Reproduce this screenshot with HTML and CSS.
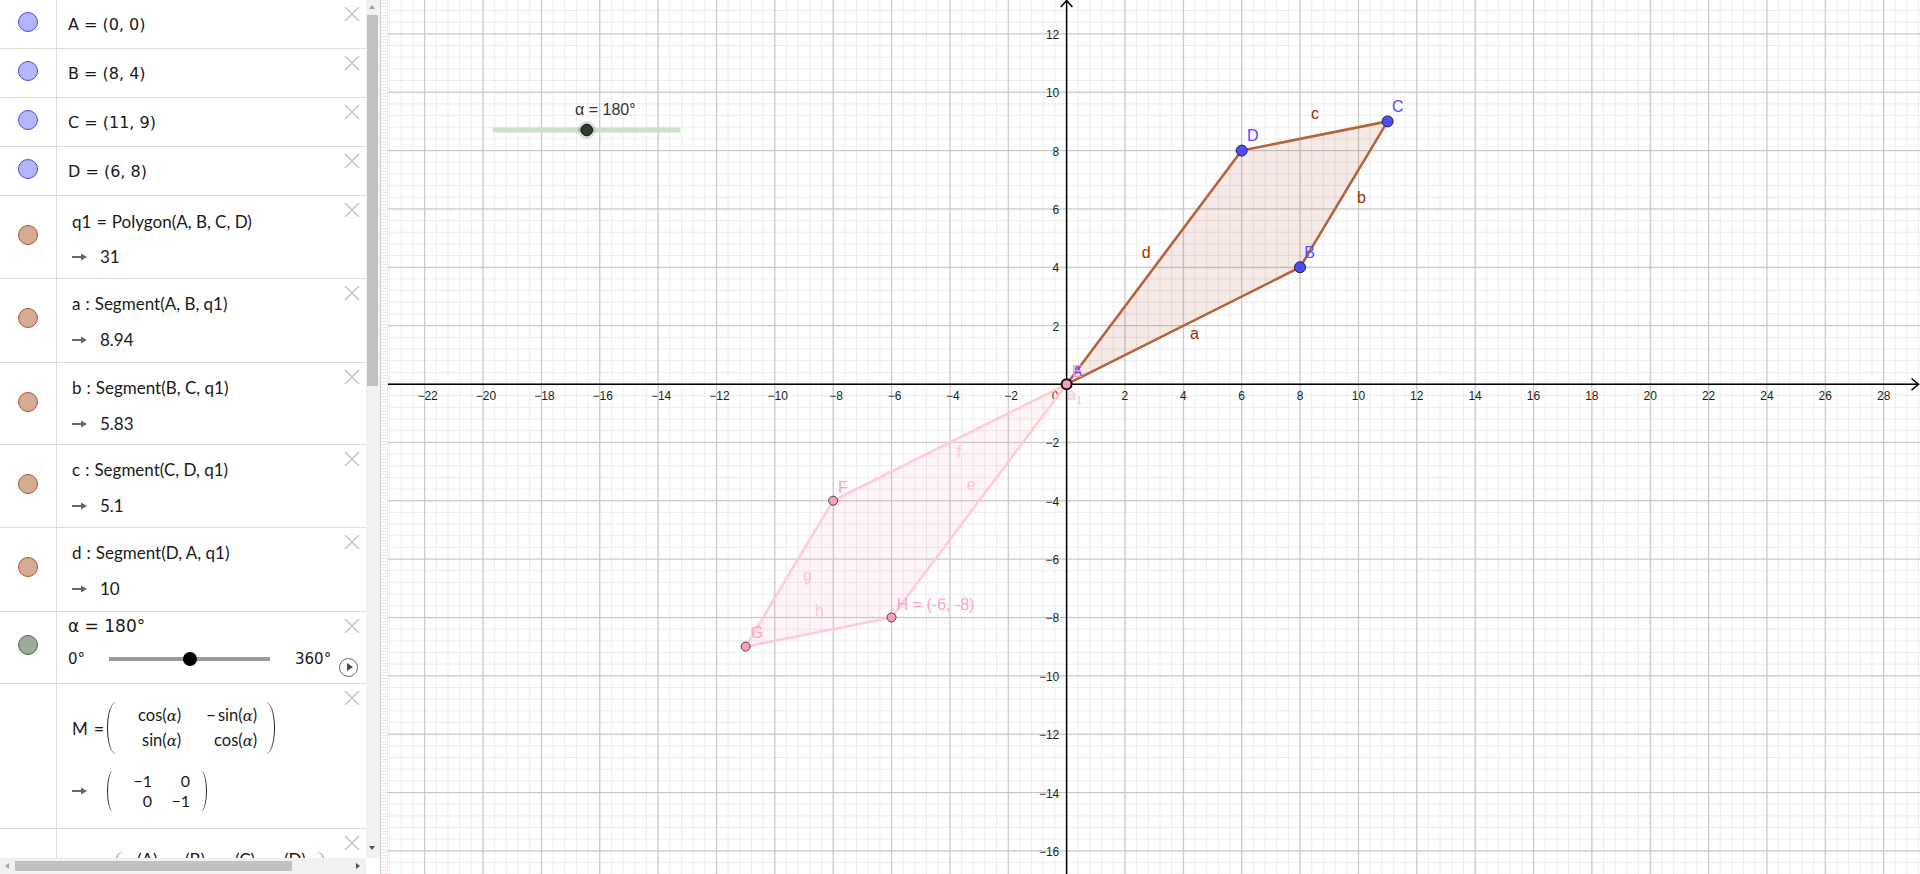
FILE: index.html
```html
<!DOCTYPE html>
<html lang="en">
<head>
<meta charset="utf-8">
<title>GeoGebra – Rotation</title>
<link rel="stylesheet" href="styles.css">
</head>
<body>
<div class="app">
  <aside class="algebra">
    <div class="av-list">
      <div class="row pt">
        <div class="icon"><span class="dot blue"></span></div>
        <div class="txt plain">A = (0, 0)</div>
        <span class="close"><svg viewBox="0 0 16 16"><path d="M1 1L15 15M15 1L1 15"/></svg></span>
      </div>
      <div class="row pt">
        <div class="icon"><span class="dot blue"></span></div>
        <div class="txt plain">B = (8, 4)</div>
        <span class="close"><svg viewBox="0 0 16 16"><path d="M1 1L15 15M15 1L1 15"/></svg></span>
      </div>
      <div class="row pt">
        <div class="icon"><span class="dot blue"></span></div>
        <div class="txt plain">C = (11, 9)</div>
        <span class="close"><svg viewBox="0 0 16 16"><path d="M1 1L15 15M15 1L1 15"/></svg></span>
      </div>
      <div class="row pt">
        <div class="icon"><span class="dot blue"></span></div>
        <div class="txt plain">D = (6, 8)</div>
        <span class="close"><svg viewBox="0 0 16 16"><path d="M1 1L15 15M15 1L1 15"/></svg></span>
      </div>
      <div class="row tex r82">
        <div class="icon"><span class="dot brown"></span></div>
        <div class="txt latex">
          <div class="l1">q1<span class="rel">=</span>Polygon(A, B, C, D)</div>
          <div class="l2"><svg class="arrow" viewBox="0 0 15 8"><path d="M0 4H11"/><polygon points="9,0.5 15,4 9,7.5"/></svg><span>31</span></div>
        </div>
        <span class="close"><svg viewBox="0 0 16 16"><path d="M1 1L15 15M15 1L1 15"/></svg></span>
      </div>
      <div class="row tex r83">
        <div class="icon"><span class="dot brown"></span></div>
        <div class="txt latex">
          <div class="l1">a<span class="col">:</span>Segment(A, B, q1)</div>
          <div class="l2"><svg class="arrow" viewBox="0 0 15 8"><path d="M0 4H11"/><polygon points="9,0.5 15,4 9,7.5"/></svg><span>8.94</span></div>
        </div>
        <span class="close"><svg viewBox="0 0 16 16"><path d="M1 1L15 15M15 1L1 15"/></svg></span>
      </div>
      <div class="row tex r81">
        <div class="icon"><span class="dot brown"></span></div>
        <div class="txt latex">
          <div class="l1">b<span class="col">:</span>Segment(B, C, q1)</div>
          <div class="l2"><svg class="arrow" viewBox="0 0 15 8"><path d="M0 4H11"/><polygon points="9,0.5 15,4 9,7.5"/></svg><span>5.83</span></div>
        </div>
        <span class="close"><svg viewBox="0 0 16 16"><path d="M1 1L15 15M15 1L1 15"/></svg></span>
      </div>
      <div class="row tex r82">
        <div class="icon"><span class="dot brown"></span></div>
        <div class="txt latex">
          <div class="l1">c<span class="col">:</span>Segment(C, D, q1)</div>
          <div class="l2"><svg class="arrow" viewBox="0 0 15 8"><path d="M0 4H11"/><polygon points="9,0.5 15,4 9,7.5"/></svg><span>5.1</span></div>
        </div>
        <span class="close"><svg viewBox="0 0 16 16"><path d="M1 1L15 15M15 1L1 15"/></svg></span>
      </div>
      <div class="row tex r83">
        <div class="icon"><span class="dot brown"></span></div>
        <div class="txt latex">
          <div class="l1">d<span class="col">:</span>Segment(D, A, q1)</div>
          <div class="l2"><svg class="arrow" viewBox="0 0 15 8"><path d="M0 4H11"/><polygon points="9,0.5 15,4 9,7.5"/></svg><span>10</span></div>
        </div>
        <span class="close"><svg viewBox="0 0 16 16"><path d="M1 1L15 15M15 1L1 15"/></svg></span>
      </div>
      <div class="row sl">
        <div class="icon"><span class="dot green"></span></div>
        <div class="txt slc">
          <div class="sl1">α = 180°</div>
          <div class="sl2">
            <span class="min">0°</span>
            <span class="track"><span class="knob"></span></span>
            <span class="max">360°</span>
            <span class="play"></span>
          </div>
        </div>
        <span class="close"><svg viewBox="0 0 16 16"><path d="M1 1L15 15M15 1L1 15"/></svg></span>
      </div>
      <div class="row mat">
        <div class="icon"></div>
        <div class="txt latex matc">
          <div class="mline1">
            <span>M</span><span class="eq">=</span>
            <span class="paren pl big"></span>
            <div class="mgrid g1">
              <span>cos(<i class="mi">α</i>)</span>
              <span>−&#8201;sin(<i class="mi">α</i>)</span>
              <span>sin(<i class="mi">α</i>)</span>
              <span>cos(<i class="mi">α</i>)</span>
            </div>
            <span class="paren pr big"></span>
          </div>
          <div class="mline2">
            <svg class="arrow am" viewBox="0 0 15 8"><path d="M0 4H11"/><polygon points="9,0.5 15,4 9,7.5"/></svg>
            <span class="paren pl small"></span>
            <div class="mgrid g2">
              <span>−1</span><span>0</span>
              <span>0</span><span>−1</span>
            </div>
            <span class="paren pr small"></span>
          </div>
        </div>
        <span class="close"><svg viewBox="0 0 16 16"><path d="M1 1L15 15M15 1L1 15"/></svg></span>
      </div>
      <div class="row last">
        <div class="icon"></div>
        <div class="txt latex lastc">
          <span class="paren pl big lp"></span>
          <span class="li w48">(A)</span>
          <span class="li w50">(B)</span>
          <span class="li w49">(C)</span>
          <span class="li w34">(D)</span>
          <span class="paren pr big lp"></span>
        </div>
        <span class="close"><svg viewBox="0 0 16 16"><path d="M1 1L15 15M15 1L1 15"/></svg></span>
      </div>
    </div>
    <div class="vscroll"><span class="arr up"></span><span class="vthumb"></span><span class="arr down"></span></div>
    <div class="hscroll"><span class="arr left"></span><span class="hthumb"></span><span class="arr right"></span></div>
    <div class="corner"></div>
  </aside>
  <div class="splitter"></div>
  <main class="graphics">
    <svg class="board" width="1532" height="874" viewBox="0 0 1532 874">
      <defs>
        <pattern id="minor" patternUnits="userSpaceOnUse" x="678.1" y="383.5" width="11.672" height="11.672">
          <rect x="0" y="0" width="11.672" height="1" fill="#ebebeb"/>
          <rect x="0" y="0" width="1" height="11.672" fill="#ebebeb"/>
        </pattern>
        <pattern id="major" patternUnits="userSpaceOnUse" x="678.1" y="383.5" width="58.36" height="58.36">
          <rect x="0" y="0" width="58.36" height="1.1" fill="#c4c4c4"/>
          <rect x="0" y="0" width="1.1" height="58.36" fill="#c4c4c4"/>
        </pattern>
      </defs>
      <rect width="1532" height="874" fill="#ffffff"/>
      <rect width="1532" height="874" fill="url(#minor)"/>
      <rect width="1532" height="874" fill="url(#major)"/>

      <g class="axis">
        <path d="M0 384.3H1530"/>
        <path d="M1523.5 378.5L1530.5 384.3L1523.5 390.1"/>
        <path d="M678.6 0V874"/>
        <path d="M672.8 7L678.6 0.5L684.4 7"/>
      </g>

      <g class="tk xt">
        <text x="39.6" y="400">−22</text>
        <text x="98" y="400">−20</text>
        <text x="156.4" y="400">−18</text>
        <text x="214.7" y="400">−16</text>
        <text x="273.1" y="400">−14</text>
        <text x="331.4" y="400">−12</text>
        <text x="389.8" y="400">−10</text>
        <text x="448.2" y="400">−8</text>
        <text x="506.5" y="400">−6</text>
        <text x="564.9" y="400">−4</text>
        <text x="623.2" y="400">−2</text>
        <text x="667" y="400">0</text>
        <text x="736.96" y="400">2</text>
        <text x="795.32" y="400">4</text>
        <text x="853.68" y="400">6</text>
        <text x="912.04" y="400">8</text>
        <text x="970.4" y="400">10</text>
        <text x="1028.76" y="400">12</text>
        <text x="1087.12" y="400">14</text>
        <text x="1145.48" y="400">16</text>
        <text x="1203.84" y="400">18</text>
        <text x="1262.2" y="400">20</text>
        <text x="1320.56" y="400">22</text>
        <text x="1378.92" y="400">24</text>
        <text x="1437.28" y="400">26</text>
        <text x="1495.64" y="400">28</text>
      </g>
      <g class="tk yt">
        <text x="671.3" y="38.8">12</text>
        <text x="671.3" y="97.2">10</text>
        <text x="671.3" y="155.6">8</text>
        <text x="671.3" y="213.9">6</text>
        <text x="671.3" y="272.3">4</text>
        <text x="671.3" y="330.6">2</text>
        <text x="671.3" y="447.4">−2</text>
        <text x="671.3" y="505.7">−4</text>
        <text x="671.3" y="564.1">−6</text>
        <text x="671.3" y="622.4">−8</text>
        <text x="671.3" y="680.8">−10</text>
        <text x="671.3" y="739.2">−12</text>
        <text x="671.3" y="797.5">−14</text>
        <text x="671.3" y="855.9">−16</text>
      </g>

      <polygon class="q1" points="678.6,384.3 912.04,267.28 999.58,121.38 853.68,150.56"/>
      <polygon class="q1r" points="678.6,384.3 445.16,500.72 357.62,646.62 503.52,617.44"/>

      <g class="lb seg">
        <text x="802" y="339">a</text>
        <text x="969" y="203">b</text>
        <text x="923" y="119">c</text>
        <text x="753.7" y="258">d</text>
      </g>
      <g class="lb segp">
        <text x="578.7" y="490">e</text>
        <text x="568.7" y="457">f</text>
        <text x="415" y="581">g</text>
        <text x="427" y="616">h</text>
        <text x="679" y="400">a<tspan class="sub" dy="4">1</tspan></text>
      </g>

      <circle class="pb" cx="912.04" cy="267.28" r="5.5"/>
      <circle class="pb" cx="999.58" cy="121.38" r="5.5"/>
      <circle class="pb" cx="853.68" cy="150.56" r="5.5"/>
      <circle class="pp" cx="445.16" cy="500.72" r="4.5"/>
      <circle class="pp" cx="357.62" cy="646.62" r="4.5"/>
      <circle class="pp" cx="503.52" cy="617.44" r="4.5"/>
      <circle class="po" cx="678.6" cy="384.3" r="5"/>

      <g class="lb ptb">
        <text x="916.3" y="258">B</text>
        <text x="1004" y="112">C</text>
        <text x="859" y="141">D</text>
        <text x="683.7" y="377">A</text>
      </g>
      <g class="lb ptp">
        <text x="683.7" y="377">E</text>
        <text x="450" y="493">F</text>
        <text x="362.7" y="638">G</text>
        <text x="508.7" y="610">H = (-6, -8)</text>
      </g>

      <text class="sltext" x="187" y="115">α = 180°</text>
      <line class="sline" x1="107" y1="130" x2="290" y2="130"/>
      <circle cx="198.7" cy="130" r="9" fill="rgba(60,90,60,0.18)"/>
      <circle class="sknob" cx="198.7" cy="130" r="5.8"/>
    </svg>
  </main>
</div>
</body>
</html>
```

FILE: styles.css
```css
html, body {
  margin: 0;
  padding: 0;
  background: #ffffff;
  overflow: hidden;
}

.app {
  display: flex;
  width: 1920px;
  height: 874px;
}

/* ---------- Algebra view ---------- */
.algebra {
  flex: none;
  width: 380px;
  display: grid;
  grid-template-columns: 366px 14px;
  grid-template-rows: 858px 16px;
  border-right: 1px solid #cfcfcf;
  background: #ffffff;
}

.av-list {
  overflow: hidden;
  color: #1a1a1a;
}

.row {
  display: flex;
  border-bottom: 1px solid #dcdcdc;
  box-sizing: content-box;
}
.row.pt { height: 48px; }
.row.r81 { height: 81px; }
.row.r82 { height: 82px; }
.row.r83 { height: 83px; }
.row.sl { height: 71px; }
.row.mat { height: 144px; }
.row.last { height: 80px; }

.icon {
  flex: none;
  width: 56px;
  border-right: 1px solid #dcdcdc;
  display: flex;
  justify-content: center;
  align-items: flex-start;
}

.dot {
  display: block;
  width: 18px;
  height: 18px;
  border-radius: 50%;
  border: 1px solid;
}
.pt .dot { margin-top: 12px; }
.tex .dot { margin-top: 29px; }
.sl .dot { margin-top: 23px; }

.dot.blue { background: #b5b5fb; border-color: #4a4ae6; }
.dot.brown { background: #d5ab96; border-color: #a9562e; }
.dot.green { background: #9eab9c; border-color: #566154; }

.txt {
  flex: 1;
  min-width: 0;
  white-space: nowrap;
}

.close {
  flex: none;
  width: 16px;
  height: 16px;
  margin: 6px 6px 0 0;
}
.close svg {
  display: block;
  width: 16px;
  height: 16px;
  fill: none;
  stroke: #cdc8c8;
  stroke-width: 1.7;
}

.plain {
  font-family: "DejaVu Sans", sans-serif;
  font-size: 16px;
  line-height: 24px;
  padding: 13px 0 0 11px;
}

.latex {
  font-family: Lato, "DejaVu Sans", sans-serif;
  font-size: 17px;
  padding: 13px 0 0 15px;
}
.l1 { line-height: 24px; height: 24px; }
.rel { margin: 0 5px; font-size: 18px; }
.col { margin: 0 5px; }
.l2 {
  display: flex;
  align-items: center;
  gap: 13px;
  height: 24px;
  line-height: 24px;
  margin-top: 12px;
}

.arrow {
  flex: none;
  width: 15px;
  height: 8px;
  display: block;
}
.arrow path { stroke: #666; stroke-width: 2; fill: none; }
.arrow polygon { fill: #666; }

/* slider row */
.slc {
  font-family: "DejaVu Sans", sans-serif;
  padding: 3px 0 0 11px;
}
.sl1 { font-size: 17px; line-height: 22px; }
.sl2 {
  display: flex;
  align-items: center;
  height: 22px;
  margin-top: 11px;
  font-size: 15px;
  line-height: 22px;
}
.sl2 > span { flex: none; }
.min { width: 41px; }
.track {
  width: 161px;
  height: 4px;
  background: #9a9a9a;
  position: relative;
}
.knob {
  position: absolute;
  left: 50%;
  top: 50%;
  width: 14px;
  height: 14px;
  margin: -7px 0 0 -7px;
  border-radius: 50%;
  background: #000;
}
.max { margin-left: 25px; }
.play {
  box-sizing: border-box;
  width: 19px;
  height: 19px;
  border: 1.5px solid #6a6a6a;
  border-radius: 50%;
  margin: 16px 0 0 8px;
  display: flex;
  align-items: center;
  justify-content: center;
}
.play::after {
  content: "";
  width: 0;
  height: 0;
  margin-left: 2px;
  border-top: 4px solid transparent;
  border-bottom: 4px solid transparent;
  border-left: 6px solid #4a4a4a;
}

/* matrix row */
.matc { padding: 18px 0 0 15px; }
.mline1 {
  display: flex;
  align-items: center;
  height: 52px;
}
.eq { margin: 0 3px 0 6px; font-size: 18px; }
.paren {
  display: block;
  flex: none;
  box-sizing: border-box;
}
.pl { border-left: 1.5px solid #222; }
.pr { border-right: 1.5px solid #222; }
.big { width: 9px; height: 52px; }
.big.pl { border-radius: 9px 0 0 9px / 26px 0 0 26px; }
.big.pr { border-radius: 0 9px 9px 0 / 0 26px 26px 0; }
.small { width: 6px; height: 40px; }
.small.pl { border-radius: 6px 0 0 6px / 20px 0 0 20px; }
.small.pr { border-radius: 0 6px 6px 0 / 0 20px 20px 0; }

.mgrid {
  display: grid;
  justify-items: end;
  flex: none;
}
.g1 {
  grid-template-columns: 62px 76px;
  line-height: 24px;
  margin: 0 9px 0 3px;
  font-size: 16.5px;
}
.g2 {
  grid-template-columns: 35px 38px;
  line-height: 20px;
  margin: 0 11px 0 4px;
  font-size: 16px;
}
.mi {
  font-family: "DejaVu Serif", serif;
  font-style: italic;
  font-size: 15px;
}
.mline2 {
  display: flex;
  align-items: center;
  height: 40px;
  margin-top: 17px;
}
.am { margin-right: 20px; }

/* last (cut) row */
.lastc {
  display: flex;
  align-items: flex-start;
  padding: 19px 0 0 56px;
  line-height: 24px;
}
.lp { margin-top: 4px; }
.lp.pl { margin-right: 15px; }
.li { display: block; flex: none; }
.w48 { width: 48px; }
.w50 { width: 50px; }
.w49 { width: 49px; }
.w34 { width: 34px; }

/* scrollbars */
.vscroll {
  background: #f1f1f1;
  display: flex;
  flex-direction: column;
  align-items: flex-start;
}
.arr {
  display: block;
  width: 0;
  height: 0;
  flex: none;
}
.arr.up {
  margin: 5px 0 0 3px;
  border-left: 3.5px solid transparent;
  border-right: 3.5px solid transparent;
  border-bottom: 4px solid #a3a3a3;
}
.vthumb {
  display: block;
  width: 11px;
  height: 371px;
  margin: 6px 0 0 1px;
  background: #c1c1c1;
}
.arr.down {
  margin: auto 0 8px 3px;
  border-left: 3.5px solid transparent;
  border-right: 3.5px solid transparent;
  border-top: 4px solid #505050;
}
.hscroll {
  background: #f1f1f1;
  display: flex;
  align-items: center;
}
.arr.left {
  margin-left: 5px;
  border-top: 3.5px solid transparent;
  border-bottom: 3.5px solid transparent;
  border-right: 4px solid #a3a3a3;
}
.hthumb {
  display: block;
  width: 277px;
  height: 10px;
  margin-left: 6px;
  background: #c1c1c1;
}
.arr.right {
  margin: 0 6px 0 auto;
  border-top: 3.5px solid transparent;
  border-bottom: 3.5px solid transparent;
  border-left: 4px solid #505050;
}
.corner { background: #ffffff; }

/* splitter */
.splitter {
  flex: none;
  width: 6px;
  border-right: 1px solid #ececec;
  background: repeating-linear-gradient(to bottom, #f4e6e6 0 1px, #ffffff 1px 3px);
}

/* ---------- Graphics view ---------- */
.graphics {
  flex: 1;
  overflow: hidden;
  background: #ffffff;
}
.board { display: block; }

.axis path {
  fill: none;
  stroke: #000;
  stroke-width: 1.5;
}

.tk {
  font-family: "Liberation Sans", Arial, sans-serif;
  font-size: 12px;
  fill: #1e1e1e;
}
.xt { text-anchor: middle; }
.yt { text-anchor: end; }

.q1 {
  fill: rgba(153, 51, 0, 0.1);
  stroke: #b4643c;
  stroke-width: 2.6;
  stroke-linejoin: round;
}
.q1r {
  fill: rgba(255, 170, 190, 0.12);
  stroke: #ffccd5;
  stroke-width: 2.6;
  stroke-linejoin: round;
}

.pb { fill: #4d4dff; stroke: #202040; stroke-width: 1; }
.pp { fill: #ff9dbc; stroke: #444; stroke-width: 1; }
.po { fill: #ff9dbc; stroke: #111; stroke-width: 2; }

.lb {
  font-family: "Liberation Sans", Arial, sans-serif;
  font-size: 16px;
}
.seg { fill: #993300; }
.segp { fill: #ffc6d3; }
.sub { font-size: 11px; }
.ptb { fill: #4d4dff; }
.ptp { fill: #ff9fbf; }

.sltext {
  font-family: "Liberation Sans", Arial, sans-serif;
  font-size: 16px;
  fill: #333;
}
.sline {
  stroke: #cde0c9;
  stroke-width: 5;
  stroke-linecap: round;
}
.sknob { fill: #2e3b2e; stroke: #111; stroke-width: 1; }
```
